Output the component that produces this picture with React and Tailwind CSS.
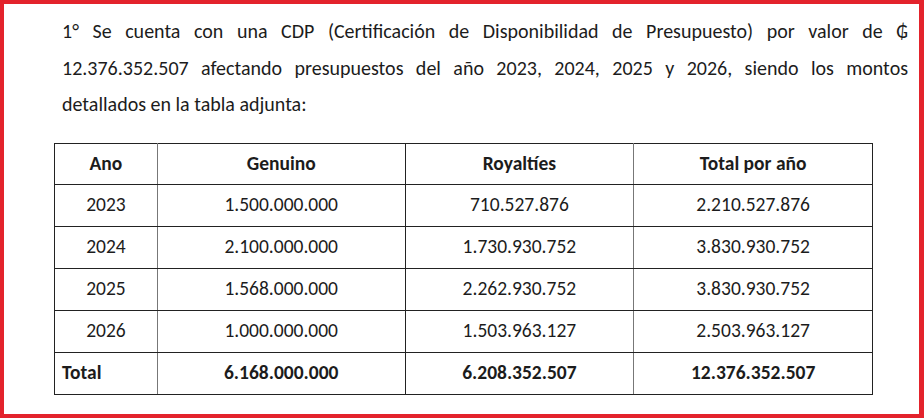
const rows = [
  { year: "2023", genuino: "1.500.000.000", royalties: "710.527.876", total: "2.210.527.876" },
  { year: "2024", genuino: "2.100.000.000", royalties: "1.730.930.752", total: "3.830.930.752" },
  { year: "2025", genuino: "1.568.000.000", royalties: "2.262.930.752", total: "3.830.930.752" },
  { year: "2026", genuino: "1.000.000.000", royalties: "1.503.963.127", total: "2.503.963.127" },
];

const font = { fontFamily: "Carlito, Calibri, 'Open Sans', sans-serif" };

function App() {
  return (
    <div
      className="box-border h-[418px] w-[924px] overflow-hidden border-t-4 border-b-4 border-l-4 border-r-[5px] border-[#e3232c] bg-white text-[#1c1c1c]"
      style={font}
    >
      <div className="pl-[58px] pr-[11px] pt-[9px] text-[20px] leading-[36.5px]">
        <p className="text-justify [text-align-last:justify]">
          1° Se cuenta con una CDP (Certificación de Disponibilidad de Presupuesto) por valor de ₲
        </p>
        <p className="text-justify [text-align-last:justify]">
          12.376.352.507 afectando presupuestos del año 2023, 2024, 2025 y 2026, siendo los montos
        </p>
        <p>detallados en la tabla adjunta:</p>
      </div>

      <table className="ml-[50px] mt-[20px] w-[819px] border-collapse text-[19.5px]">
        <colgroup>
          <col className="w-[103px]" />
          <col className="w-[248px]" />
          <col className="w-[229px]" />
          <col className="w-[239px]" />
        </colgroup>
        <thead>
          <tr className="h-[41px]">
            <th className="border border-[#222] border-r-[#777] font-bold">Ano</th>
            <th className="border border-[#222] font-bold">Genuino</th>
            <th className="border border-[#222] border-r-[#777] font-bold">Royaltíes</th>
            <th className="border border-[#222] font-bold">Total por año</th>
          </tr>
        </thead>
        <tbody>
          {rows.map((row) => (
            <tr key={row.year} className="h-[42px] text-center">
              <td className="border border-[#222] border-r-[#777]">{row.year}</td>
              <td className="border border-[#222]">{row.genuino}</td>
              <td className="border border-[#222] border-r-[#777]">{row.royalties}</td>
              <td className="border border-[#222]">{row.total}</td>
            </tr>
          ))}
          <tr className="h-[42px] font-bold">
            <td className="border border-[#222] border-r-[#777] pl-[7px] text-left">Total</td>
            <td className="border border-[#222] text-center">6.168.000.000</td>
            <td className="border border-[#222] border-r-[#777] text-center">6.208.352.507</td>
            <td className="border border-[#222] text-center">12.376.352.507</td>
          </tr>
        </tbody>
      </table>
    </div>
  );
}

export default App;
